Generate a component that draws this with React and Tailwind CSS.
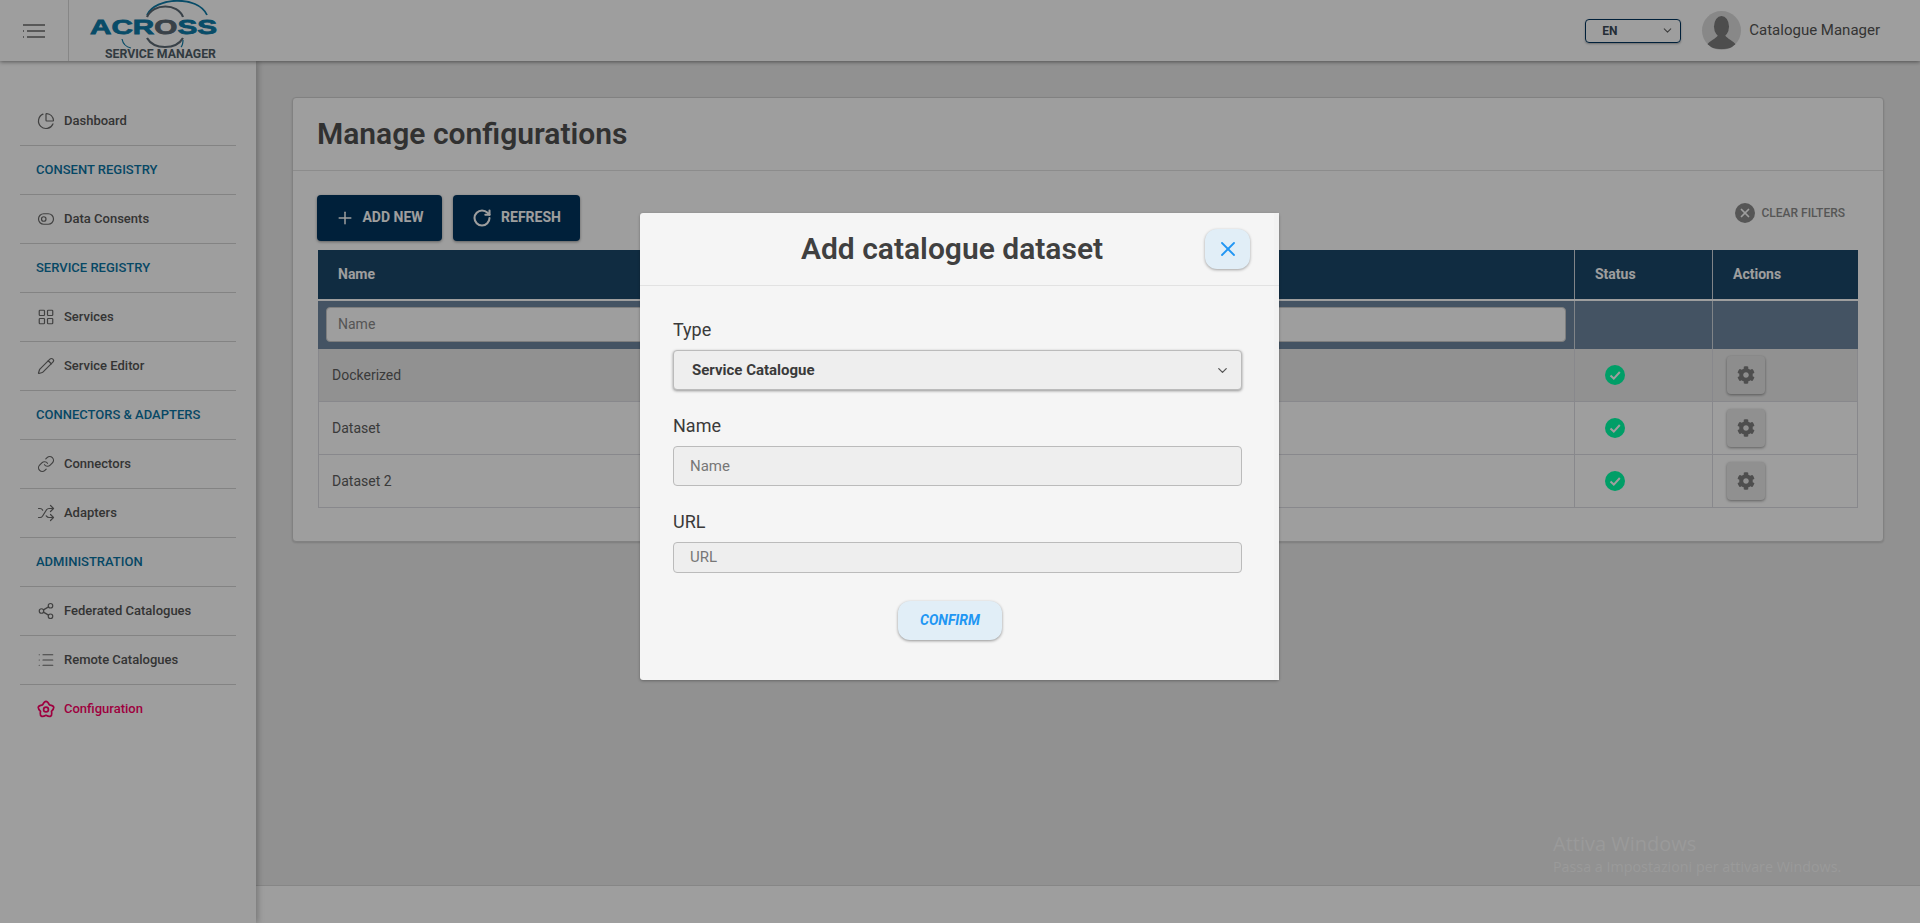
import React from "react";
import { ChevronDown, ChartPie, ToggleLeft, LayoutGrid, Pencil, Link, Shuffle, Share2, List, Plus, RotateCw, X } from "lucide-react";
import { FaCog } from "react-icons/fa";

const FlowerCog = ({ className }) => (
    <svg width="18" height="18" viewBox="0 0 18 18" fill="none" stroke="currentColor" strokeWidth="1.7" strokeLinejoin="round" className={className}>
        <path d="M5.6 4.8 Q9 -2 12.4 4.8 Q19.9 5.9 14.5 11.3 Q15.8 18.8 9 15.3 Q2.2 18.8 3.5 11.3 Q-1.9 5.9 5.6 4.8 Z" />
        <circle cx="9" cy="9.5" r="2.4" />
    </svg>
);

const menu = [
    { label: "Dashboard", icon: ChartPie },
    { label: "CONSENT REGISTRY" },
    { label: "Data Consents", icon: ToggleLeft },
    { label: "SERVICE REGISTRY" },
    { label: "Services", icon: LayoutGrid },
    { label: "Service Editor", icon: Pencil },
    { label: "CONNECTORS & ADAPTERS" },
    { label: "Connectors", icon: Link },
    { label: "Adapters", icon: Shuffle },
    { label: "ADMINISTRATION" },
    { label: "Federated Catalogues", icon: Share2 },
    { label: "Remote Catalogues", icon: List },
    { label: "Configuration", icon: FlowerCog, active: true },
];

const rows = ["Dockerized", "Dataset", "Dataset 2"];

const Logo = () => (
    <svg width="160" height="61" viewBox="0 0 160 61" className="shrink-0">
        <path d="M 78 15 C 86 -3 129 -5 138 15" fill="none" stroke="#0d7ba8" strokeWidth="1.8" />
        <path d="M 78 17 C 84 3 109 3 114 17" fill="none" stroke="#5c6a74" strokeWidth="2.2" />
        <path d="M 78 38 C 85 50 107 50 114 38" fill="none" stroke="#5c6a74" strokeWidth="2.2" />
        <path d="M 53 39 C 54 44 57 47 62 48" fill="none" stroke="#0d7ba8" strokeWidth="1.2" />
        <path d="M 112 47 C 114 45 114 43 114 40" fill="none" stroke="#0d7ba8" strokeWidth="1.2" />
        <text x="21" y="34" textLength="127" lengthAdjust="spacingAndGlyphs" fontFamily="Liberation Sans, sans-serif" fontWeight="700" fontSize="21" fill="#0d7ba8" stroke="#0d7ba8" strokeWidth="0.8">
            ACR<tspan fill="#5c6a74" stroke="#5c6a74">O</tspan>SS
        </text>
        <text x="36" y="58" textLength="111" lengthAdjust="spacingAndGlyphs" fontFamily="Roboto, sans-serif" fontWeight="700" fontSize="12.5" fill="#505e68">
            SERVICE MANAGER
        </text>
    </svg>
);

const Sidebar = () => (
    <aside className="w-[256px] shrink-0 bg-white pt-[36px] px-[20px] shadow-[2px_0_6px_rgba(0,0,0,0.25)] z-10">
        {menu.map((item) => {
            const Icon = item.icon;
            return (
                <div key={item.label} className="h-[49px] flex items-center border-b border-[#d4d4d4] last:border-b-transparent text-[13px] font-medium">
                    {Icon ? (
                        <>
                            <Icon size={18} strokeWidth={1.6} className={`ml-[17px] mr-[9px] ${item.active ? "text-[#ff0066]" : "text-[#6a6a6a]"}`} />
                            <span className={item.active ? "text-[#ff0066]" : "text-[#555555]"}>{item.label}</span>
                        </>
                    ) : (
                        <span className="ml-[16px] text-[#0b74a4]">{item.label}</span>
                    )}
                </div>
            );
        })}
    </aside>
);

const App = () => {
    return (
        <div className="relative h-screen overflow-hidden bg-[#ebebeb] flex flex-col font-['Roboto',sans-serif]">
            {/* Navbar */}
            <header className="h-[61px] shrink-0 bg-white flex items-center shadow-[0_1px_4px_rgba(0,0,0,0.45)] z-20">
                <div className="w-[69px] h-full shrink-0 border-r border-[#d8d8d8] flex items-center justify-center">
                    <svg width="24" height="16" viewBox="0 0 24 16" fill="none" stroke="#6a6a6a" strokeWidth="1.6">
                        <path d="M1 2h22M1 8h1M5 8h18M1 14h1M5 14h18" />
                    </svg>
                </div>
                <Logo />
                <div className="ml-auto flex items-center mr-[40px]">
                    <div className="w-[96px] h-[24px] border-[1.5px] border-[#00345e] rounded-[4px] flex items-center justify-between pl-[16px] pr-[6px] text-[12px] font-bold text-[#3a4a58] shadow-[0_1px_2px_rgba(0,0,0,0.3)]">
                        EN
                        <ChevronDown size={13} className="text-[#666]" />
                    </div>
                    <div className="ml-[21px] w-[39px] h-[39px] rounded-full bg-[#dcdcdc] overflow-hidden">
                        <svg viewBox="0 0 39 39" width="39" height="39">
                            <ellipse cx="19.5" cy="15.5" rx="7.5" ry="10.5" fill="#7c7c7c" />
                            <path d="M4 35 C8 29 14 28 16 24 H23 C25 28 31 29 35 35 C30 39 9 39 4 35 Z" fill="#7c7c7c" />
                        </svg>
                    </div>
                    <span className="ml-[8px] text-[15px] text-[#555555]">Catalogue Manager</span>
                </div>
            </header>

            <div className="flex-1 flex min-h-0">
                <Sidebar />
                <div className="flex-1 flex flex-col min-w-0">
                    <main className="flex-1 pt-[36px] pl-[36px] pr-[36px]">
                        <div className="h-[445px] bg-white border border-[#d0d0d0] rounded-[4px] shadow-[0_1px_2px_rgba(0,0,0,0.15)]">
                            <div className="h-[73px] border-b border-[#e2e2e2] flex items-center pl-[24px] pb-[2px]">
                                <h1 className="text-[30px] font-semibold text-[#505050]">Manage configurations</h1>
                            </div>
                            <div className="px-[24px] pt-[23px]">
                                <div className="flex items-center h-[47px]">
                                    <button className="w-[125px] h-[46px] rounded-[4px] bg-[#00345e] text-white text-[14px] font-bold flex items-center justify-center gap-[7px] shadow-[0_1px_3px_rgba(0,0,0,0.4)]">
                                        <Plus size={20} strokeWidth={1.8} />
                                        ADD NEW
                                    </button>
                                    <button className="ml-[11px] w-[127px] h-[46px] rounded-[4px] bg-[#00345e] text-white text-[14px] font-bold flex items-center justify-center gap-[9px] shadow-[0_1px_3px_rgba(0,0,0,0.4)]">
                                        <RotateCw size={20} strokeWidth={2.5} />
                                        REFRESH
                                    </button>
                                    <div className="ml-auto mr-[14px] mb-[9px] flex items-center gap-[6px] text-[12px] font-medium text-[#8c8c8c]">
                                        <span className="w-[20px] h-[20px] rounded-full bg-[#8c8c8c] flex items-center justify-center">
                                            <X size={14} strokeWidth={3} className="text-white" />
                                        </span>
                                        CLEAR FILTERS
                                    </div>
                                </div>
                                {/* Table */}
                                <div className="mt-[9px] ml-[1px] w-[1540px] text-[14px]">
                                    <div className="h-[49px] flex bg-[#1b486a] text-white font-bold">
                                        <div className="w-[1256px] flex items-center pl-[20px]">Name</div>
                                        <div className="w-[138px] flex items-center pl-[20px] border-l border-[#cfd6dc]">Status</div>
                                        <div className="flex-1 flex items-center pl-[20px] border-l border-[#cfd6dc]">Actions</div>
                                    </div>
                                    <div className="mt-[2px] h-[48px] flex bg-[#6e87a0]">
                                        <div className="w-[1256px] flex items-center pl-[8px] pr-[8px] pb-[1px]">
                                            <div className="w-full h-[35px] bg-white rounded-[4px] border border-[#cccccc] flex items-center pl-[11px] text-[#8a8a8a]">Name</div>
                                        </div>
                                        <div className="w-[138px] border-l border-[#cfd6dc]"></div>
                                        <div className="flex-1 border-l border-[#cfd6dc]"></div>
                                    </div>
                                    {rows.map((name, i) => (
                                        <div key={name} className={`h-[53px] flex border-b border-x border-[#dcdce2] text-[#5e5e5e] ${i === 0 ? "bg-[#ebebeb]" : "bg-white"}`}>
                                            <div className="w-[1255px] flex items-center pl-[13px]">{name}</div>
                                            <div className="w-[138px] border-l border-[#dcdce2] flex items-center pl-[30px]">
                                                <svg width="20" height="20" viewBox="0 0 20 20">
                                                    <circle cx="10" cy="10" r="10" fill="#00ffa6" />
                                                    <path d="M5.5 10.5 L8.8 13.6 L14.8 7" fill="none" stroke="#fff" strokeWidth="2" />
                                                </svg>
                                            </div>
                                            <div className="flex-1 border-l border-[#dcdce2] flex items-center pl-[14px]">
                                                <button className={`w-[38px] h-[38px] rounded-[4px] flex items-center justify-center shadow-[0_1px_3px_rgba(0,0,0,0.4)] ${i === 0 ? "bg-[#e4e4e4]" : "bg-[#e8e8e8]"}`}>
                                                    <FaCog size={18} className="text-[#7e7e7e]" />
                                                </button>
                                            </div>
                                        </div>
                                    ))}
                                </div>
                            </div>
                        </div>
                    </main>
                    <footer className="h-[38px] shrink-0 bg-white border-t border-[#d8d8d8]"></footer>
                </div>
            </div>

            {/* Modal */}
            <div className="absolute inset-0 z-30 bg-black/38 pt-[213px] pl-[640px]">
                <div className="relative w-[639px] h-[467px] bg-[#f5f5f5] rounded-[3px] shadow-[0_1px_3px_rgba(0,0,0,0.3)]">
                    <div className="absolute top-0 right-0 bottom-0 w-[5px] bg-[#f2f2f2]"></div>
                    <div className="relative h-[73px] border-b border-[#e2e2e2] flex items-center justify-center pr-[15px] pb-[2px]">
                        <h2 className="text-[30px] font-semibold text-[#404040]">Add catalogue dataset</h2>
                        <button className="absolute right-[29px] top-[16px] w-[45px] h-[40px] rounded-[12px] bg-[#e1eef7] flex items-center justify-center shadow-[0_1px_3px_rgba(0,0,0,0.35)]">
                            <X size={24} strokeWidth={1.8} className="text-[#2196f3]" />
                        </button>
                    </div>
                    <div className="pl-[33px] pr-[37px] pt-[33px]">
                        <label className="block text-[18px] leading-[21px] text-[#3a3a3a]">Type</label>
                        <div className="mt-[10px] h-[40px] rounded-[4px] border border-[#bbbbbb] bg-[#eeeeee] flex items-center justify-between pl-[18px] pr-[11px] text-[15px] font-bold text-[#3a3a3a] shadow-[0_1px_3px_rgba(0,0,0,0.4)]">
                            Service Catalogue
                            <ChevronDown size={15} className="text-[#555]" />
                        </div>
                        <label className="block mt-[25px] text-[18px] leading-[21px] text-[#3a3a3a]">Name</label>
                        <div className="mt-[10px] h-[40px] rounded-[4px] border border-[#bbbbbb] bg-[#eeeeee] flex items-center pl-[16px] text-[15px] text-[#777777]">Name</div>
                        <label className="block mt-[25px] text-[18px] leading-[21px] text-[#3a3a3a]">URL</label>
                        <div className="mt-[10px] h-[31px] rounded-[4px] border border-[#bbbbbb] bg-[#eeeeee] flex items-center pl-[16px] text-[15px] text-[#777777]">URL</div>
                        <button className="block mt-[28px] ml-[225px] w-[104px] h-[39px] rounded-[12px] bg-[#e1eef7] text-[#2196f3] text-[14px] font-bold italic shadow-[0_1px_3px_rgba(0,0,0,0.4)]">
                            CONFIRM
                        </button>
                    </div>
                </div>
            </div>

            {/* Windows watermark */}
            <div className="absolute z-40 left-[1553px] top-[831px] font-['Open_Sans',sans-serif] text-[#9a9a9a]">
                <div className="text-[20px] leading-[26px]">Attiva Windows</div>
                <div className="text-[14.3px] leading-[20px]">Passa a Impostazioni per attivare Windows.</div>
            </div>
        </div>
    );
};

export default App;
